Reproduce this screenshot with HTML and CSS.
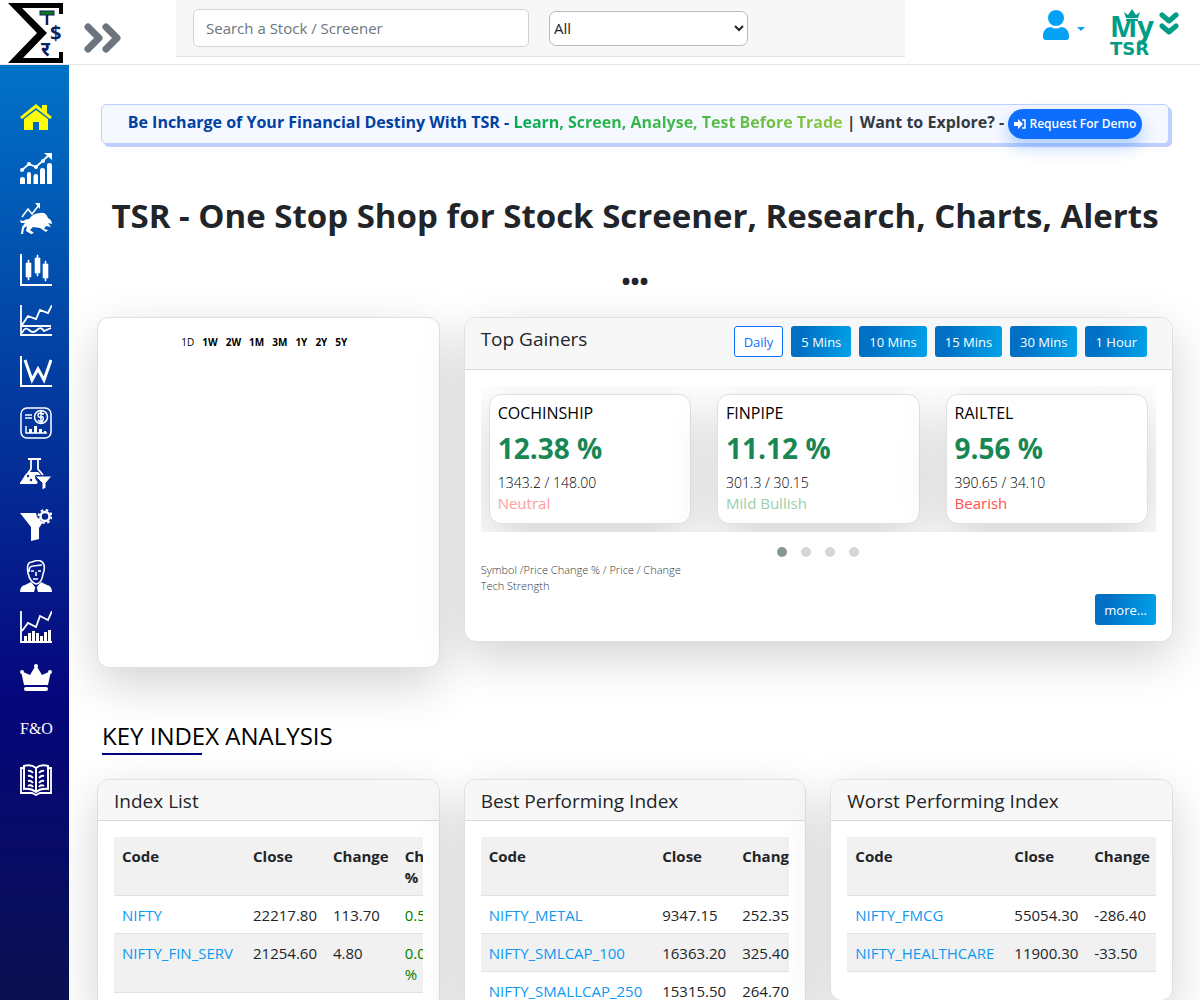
FILE: index.html
```html
<!DOCTYPE html>
<html lang="en">
<head>
<meta charset="utf-8">
<meta name="viewport" content="width=device-width, initial-scale=1">
<title>TSR - Stock Screener, Research, Charts, Alerts</title>
<link rel="stylesheet" href="styles.css">
</head>
<body>
<header class="topbar">
  <a class="logo" href="#" aria-label="TSR home">
    <svg width="58" height="62" viewBox="0 0 58 62">
      <path d="M0 0H55V11H51V5H14L39 30L15 55H51V49H55V60H0L29 30Z" fill="#000"/>
      <rect x="32" y="8" width="14" height="4" fill="#0a7a14" stroke="#0b1f66"/>
      <path d="M39 12V22" stroke="#0b1f66" stroke-width="2.500"/>
      <text x="42" y="37" class="logo-mark">$</text>
      <text x="33" y="53" class="logo-mark">र</text>
    </svg>
  </a>
  <button class="expand" type="button" aria-label="Expand menu">
    <svg width="40" height="32" viewBox="0 0 40 32" fill="none" stroke="#6c757d" stroke-width="7" stroke-linecap="round" stroke-linejoin="round"><path d="M5 5L16 16L5 27M23 5L34 16L23 27"/></svg>
  </button>
  <form class="search">
    <input class="search-input" type="text" placeholder="Search a Stock / Screener" aria-label="Search a Stock / Screener">
    <select class="search-select" aria-label="Category"><option>All</option></select>
  </form>
  <div class="account">
    <button class="user" type="button" aria-label="Account">
      <svg width="28" height="32" viewBox="0 0 28 32" fill="#05a1f5"><circle cx="14" cy="9" r="8"/><path d="M1 27C1 21 5 18 9 18Q14 21 19 18C23 18 27 21 27 27V28Q27 31 24 31H4Q1 31 1 28Z"/></svg>
      <svg width="8" height="4" viewBox="0 0 8 4" fill="#05a1f5"><path d="M0 0H8L4 4Z"/></svg>
    </button>
    <a class="mytsr" href="#">
      <span class="mytsr-name"><span class="mytsr-my">My</span><span class="mytsr-tsr">TSR</span>
        <svg class="mytsr-crown" width="18" height="12" viewBox="0 0 18 12" fill="#009c86" stroke="#fff" stroke-width="1" paint-order="stroke"><path d="M3 9L1 3L5 6L9 0L13 6L17 3L15 9ZM3 10H15V12H3Z"/></svg>
      </span>
      <svg width="20" height="24" viewBox="0 0 20 24" fill="none" stroke="#009c86" stroke-width="5" stroke-linecap="round" stroke-linejoin="round"><path d="M3 3L10 9L17 3M3 14L10 20L17 14"/></svg>
    </a>
  </div>
</header>
<div class="shell">
  <nav class="sidebar" aria-label="Main">
    <a href="#" aria-label="Home"><svg viewBox="0 0 32 32" fill="#ff0"><path d="M16 3L0 16L2 18L16 7L30 18L32 16L27 12V4H22V8Z"/><path d="M16 9L4 18V29H13V21H19V29H28V18Z"/></svg></a>
    <a href="#" aria-label="Growth"><svg viewBox="0 0 32 32"><path d="M0 27Q0 25 2.500 25Q5 25 5 27V32H0ZM7 22Q7 20 9 20Q11 20 11 22V32H7ZM13.500 24Q13.500 22 16 22Q18 22 18 24V32H13.500ZM20 18Q20 16 22.500 16Q25 16 25 18V32H20ZM27 13Q27 11 29.500 11Q32 11 32 13V32H27Z"/><path d="M2 18L9 12L16 15L29 3" fill="none" stroke="#fff" stroke-width="1.800"/><path d="M24 1H32V8Z"/><circle cx="2" cy="18" r="2"/><circle cx="9" cy="12" r="2"/><circle cx="16" cy="15" r="2"/><circle cx="23" cy="9" r="2"/></svg></a>
    <a href="#" aria-label="Bulls"><svg viewBox="0 0 32 32"><path d="M2 14L8 6L12 11L19 2" fill="none" stroke="#fff" stroke-width="1.600"/><path d="M15 0H20V6Z"/><path d="M3 18Q6 16 9 16Q13 10 20 10Q26 9 28 15Q32 17 32 21L28 20L31 24L26 23L24 26L28 27L26 29L20 25L13 24L10 27L14 30L11 31L6 28L7 23L4 25L3 31L1 31L2 24L5 20L1 20L0 17Z"/></svg></a>
    <a href="#" aria-label="Candlesticks"><svg viewBox="0 0 32 32"><path d="M1 0V31H32" fill="none" stroke="#fff" stroke-width="2"/><path d="M8 6H9V9H11V23H9V26H8V23H6V9H8ZM17 1H18V4H20V19H18V22H17V19H15V4H17ZM25 7H26V10H28V24H26V27H25V24H23V10H25Z" stroke="#fff" stroke-width=".6"/></svg></a>
    <a href="#" aria-label="Trend"><svg viewBox="0 0 32 32" fill="none" stroke="#fff" stroke-width="1.800"><path d="M1 0V30H32M2 21H31M2 20L8 11L16 14L20 5L28 8L32 0M2 28Q5 21 9 25T17 25T24 26L31 23"/></svg></a>
    <a href="#" aria-label="Patterns"><svg viewBox="0 0 32 32" fill="none" stroke="#fff"><path d="M1 0V30H32" stroke-width="2"/><path d="M5 4L12 24L18 13L24 24L31 4" stroke-width="3"/></svg></a>
    <a href="#" aria-label="Report"><svg viewBox="0 0 32 32" fill="none" stroke="#fff" stroke-width="1.500"><rect x="1" y="1" width="30" height="30" rx="6"/><circle cx="21" cy="10" r="6.500"/><path d="M5 8H12M5 11H12M24 7Q18 5 18 8T21 10T23 13T18 13M21 4V16M6 19V26H27"/><path d="M9 22H12V26H9ZM14 19H17V26H14ZM19 22H22V26H19ZM24 24H26V26H24Z" fill="#fff" stroke="none"/></svg></a>
    <a href="#" aria-label="Lab"><svg viewBox="0 0 32 32"><path d="M8 1H21M11 1V11L1 25H17M18 1V11L23 17" fill="none" stroke="#fff" stroke-width="1.800"/><path d="M5 17L9 14H18L21 17H16L15 20L18 25H1Z"/><circle cx="8" cy="18" r="1.200" fill="#042d92"/><circle cx="11" cy="22" r="1.200" fill="#042d92"/><path d="M15 18H32L26 25V30L22 32V25Z" stroke="#042d92" stroke-width="1"/></svg></a>
    <a href="#" aria-label="Filters"><svg viewBox="0 0 32 32"><path d="M0 4H16Q17 11 23 13L19 19V30L11 32V18Z"/><circle cx="25" cy="7.500" r="4.500" fill="none" stroke="#fff" stroke-width="2.500"/><circle cx="25" cy="7.500" r="6.500" fill="none" stroke="#fff" stroke-width="2" stroke-dasharray="2.600 2.500"/></svg></a>
    <a href="#" aria-label="Advisor"><svg viewBox="0 0 32 32"><path d="M0 32Q0 26 5 25L11 22L16 28L21 22L27 25Q32 26 32 32Z"/><path d="M8 13Q6 2 12 2Q22-2 24 5Q25 9 23 14Q22 23 16 24Q10 22 8 13ZM9 12Q9 6 13 6L22 5M11 11H14M18 11H21M16 12V16M13 19H18" fill="none" stroke="#fff" stroke-width="1.600"/><path d="M16 25L14 32H18Z" fill="#071684"/></svg></a>
    <a href="#" aria-label="Volume"><svg viewBox="0 0 32 32"><path d="M1 0V31H32M2 20L8 12L16 16L20 5L28 9L32 0" fill="none" stroke="#fff" stroke-width="1.800"/><path d="M4 25H7V30H4ZM8 22H11V30H8ZM12 20H15V30H12ZM16 22H19V30H16ZM20 25H23V30H20ZM24 21H27V30H24ZM28 19H31V30H28Z"/></svg></a>
    <a href="#" aria-label="Premium"><svg viewBox="0 0 32 32"><path d="M4 23L1 9L10 13L16 3L22 13L31 9L28 23Z"/><circle cx="16" cy="4" r="2"/><circle cx="2" cy="10" r="2"/><circle cx="30" cy="10" r="2"/><rect x="4" y="25" width="24" height="4" rx="2"/></svg></a>
    <a href="#" class="fno">F&amp;O</a>
    <a href="#" aria-label="Learn"><svg viewBox="0 0 32 32" fill="none" stroke="#fff"><path d="M16 4Q11 0 4 2V25Q11 24 16 28Q21 24 28 25V2Q21 0 16 4V28" stroke-width="2"/><path d="M4 4H1V29H12L16 31L20 29H31V4H28" stroke-width="1.800"/><path d="M8 7Q11 6 13 9M8 12Q11 11 13 14M8 17Q11 16 13 19M8 22Q11 20 13 23M24 7Q21 6 19 9M24 12Q21 11 19 14M24 17Q21 16 19 19M24 22Q21 20 19 23" stroke-width="2"/></svg></a>
  </nav>
  <main class="content">
    <div class="banner">
      <span class="banner-lead">Be Incharge of Your Financial Destiny With TSR - </span><span class="banner-steps">Learn, Screen, Analyse, Test Before Trade</span> | Want to Explore? -
      <button class="demo" type="button"><svg width="12" height="10" viewBox="0 0 12 10"><path d="M0 3H4V0L9 5L4 10V7H0Z" fill="#fff"/><path d="M8 1H11V9H8" fill="none" stroke="#fff" stroke-width="1.500"/></svg> Request For Demo</button>
    </div>
    <h1 class="headline">TSR - One Stop Shop for Stock Screener, Research, Charts, Alerts <span class="headline-dots">•••</span></h1>
    <div class="grid">
      <section class="card chart">
        <div class="ranges"><button type="button" class="on">1D</button><button type="button">1W</button><button type="button">2W</button><button type="button">1M</button><button type="button">3M</button><button type="button">1Y</button><button type="button">2Y</button><button type="button">5Y</button></div>
      </section>
      <section class="card gainers">
        <div class="card-head gainers-head">
          <h2 class="card-title">Top Gainers</h2>
          <div class="periods"><button class="btn outline" type="button">Daily</button><button class="btn" type="button">5 Mins</button><button class="btn" type="button">10 Mins</button><button class="btn" type="button">15 Mins</button><button class="btn" type="button">30 Mins</button><button class="btn" type="button">1 Hour</button></div>
        </div>
        <div class="card-body">
          <div class="carousel">
            <article class="card stock"><h3 class="stock-name">COCHINSHIP</h3><p class="stock-pct">12.38 %</p><p class="stock-price">1343.2 / 148.00</p><p class="neutral">Neutral</p></article>
            <article class="card stock"><h3 class="stock-name">FINPIPE</h3><p class="stock-pct">11.12 %</p><p class="stock-price">301.3 / 30.15</p><p class="bullish">Mild Bullish</p></article>
            <article class="card stock"><h3 class="stock-name">RAILTEL</h3><p class="stock-pct">9.56 %</p><p class="stock-price">390.65 / 34.10</p><p class="bearish">Bearish</p></article>
          </div>
          <div class="dots"><button type="button" class="dot active" aria-label="Page 1"></button><button type="button" class="dot" aria-label="Page 2"></button><button type="button" class="dot" aria-label="Page 3"></button><button type="button" class="dot" aria-label="Page 4"></button></div>
          <p class="legend">Symbol /Price Change % / Price / Change<br>Tech Strength</p>
          <div class="more"><button class="btn" type="button">more...</button></div>
        </div>
      </section>
    </div>
    <h2 class="section-title">KEY INDEX ANALYSIS</h2>
    <div class="grid">
      <section class="card">
        <div class="card-head"><h3 class="card-title">Index List</h3></div>
        <div class="card-body"><div class="scroller"><table class="data">
          <thead><tr><th>Code</th><th>Close</th><th>Change</th><th>Chg<br>%</th></tr></thead>
          <tbody>
          <tr><td><a href="#">NIFTY</a></td><td>22217.80</td><td>113.70</td><td class="up">0.51%</td></tr>
          <tr><td><a href="#">NIFTY_FIN_SERV</a></td><td>21254.60</td><td>4.80</td><td class="up">0.02<br>%</td></tr>
          </tbody></table></div></div>
      </section>
      <section class="card">
        <div class="card-head"><h3 class="card-title">Best Performing Index</h3></div>
        <div class="card-body"><div class="scroller"><table class="data">
          <thead><tr><th>Code</th><th>Close</th><th>Change</th><th>Chg<br>%</th></tr></thead>
          <tbody>
          <tr><td><a href="#">NIFTY_METAL</a></td><td>9347.15</td><td>252.35</td><td class="up">2.77%</td></tr>
          <tr><td><a href="#">NIFTY_SMLCAP_100</a></td><td>16363.20</td><td>325.40</td><td class="up">2.03%</td></tr>
          <tr><td><a href="#">NIFTY_SMALLCAP_250</a></td><td>15315.50</td><td>264.70</td><td class="up">1.76%</td></tr>
          </tbody></table></div></div>
      </section>
      <section class="card worst">
        <div class="card-head"><h3 class="card-title">Worst Performing Index</h3></div>
        <div class="card-body"><div class="scroller"><table class="data">
          <thead><tr><th>Code</th><th>Close</th><th>Change</th><th>Chg<br>%</th></tr></thead>
          <tbody>
          <tr><td><a href="#">NIFTY_FMCG</a></td><td>55054.30</td><td>-286.40</td><td>-0.52%</td></tr>
          <tr><td><a href="#">NIFTY_HEALTHCARE</a></td><td>11900.30</td><td>-33.50</td><td>-0.28%</td></tr>
          </tbody></table></div></div>
      </section>
    </div>
  </main>
</div>
</body>
</html>
```
FILE: styles.css
```css
* { box-sizing: border-box; }
body {
  margin: 0;
  height: 100vh;
  display: flex;
  flex-direction: column;
  font-family: "Open Sans", "Noto Sans", sans-serif;
  font-size: 15px;
  line-height: 21px;
  color: #212529;
  background: #fff;
}
h1, h2, h3, p { margin: 0; font-weight: 400; }
button, input, select { font: inherit; margin: 0; }
button { border: 0; padding: 0; background: none; cursor: pointer; }
a { color: #0d99f2; text-decoration: none; }

/* Top bar */
.topbar {
  flex: none;
  display: flex;
  align-items: flex-start;
  height: 65px;
  border-bottom: 1px solid #e4e6ee;
}
.logo { padding: 3px 0 0 8px; }
.logo svg { display: block; }
.logo-mark { font: 700 20px "Noto Sans", sans-serif; fill: #0b1f66; }
.expand { margin: 22px 0 0 17px; }
.expand svg { display: block; }
.search {
  display: flex;
  align-items: center;
  gap: 20px;
  width: 729px;
  height: 57px;
  margin-left: 53px;
  padding: 0 17px;
  background: #f7f7f7;
  border-bottom: 1px solid #dee2e6;
}
.search-input {
  width: 336px;
  height: 38px;
  padding: 0 12px;
  border: 1px solid #ced4da;
  border-radius: 5px;
  background: #fff;
}
.search-input::placeholder { color: #6c757d; opacity: 1; }
.search-select {
  width: 199px;
  height: 35px;
  border: 1px solid #bbb;
  border-radius: 7px;
  background: #fff;
  color: #212529;
}
.account {
  display: flex;
  align-items: flex-start;
  gap: 25px;
  margin-left: auto;
  padding: 9px 21px 0 0;
}
.user { display: flex; align-items: center; gap: 7px; }
.user svg { display: block; }
.user svg + svg { margin-top: 8px; }
.mytsr { display: flex; gap: 5px; color: #009c86; font-weight: 700; }
.mytsr > svg { margin-top: 3px; }
.mytsr-name { position: relative; display: block; width: 44px; }
.mytsr-my { display: block; font: 700 29px/33px "Noto Sans", sans-serif; }
.mytsr-tsr { display: block; font: 700 18px/14px "DejaVu Sans", sans-serif; }
.mytsr-crown { position: absolute; left: 13px; top: 0; }

/* Sidebar */
.shell { flex: 1; min-height: 0; display: flex; }
.sidebar {
  flex: none;
  width: 69px;
  padding: 36px 17px 0 20px;
  display: flex;
  flex-direction: column;
  gap: 19px;
  background: linear-gradient(#0072c6, #06067c 68%, #0a1050);
}
.sidebar a { display: block; height: 32px; width: 32px; }
.sidebar svg { display: block; width: 32px; height: 32px; fill: #fff; }
.sidebar svg[fill="none"] { fill: none; }
.sidebar svg[fill="#ff0"] { fill: #ff0; }
.sidebar .fno { font: 400 16px/32px "Liberation Serif", serif; color: #fff; }

/* Content */
.content {
  flex: 1;
  min-width: 0;
  padding: 39px 27px 24px 28px;
  overflow: hidden auto;
  scrollbar-width: none;
}
.banner {
  margin: 0 4px;
  height: 40px;
  text-align: center;
  font-size: 16px;
  line-height: 35px;
  font-weight: 700;
  color: #343a40;
  white-space: nowrap;
  background: #f5f8ff;
  border: 1px solid #bfcfff;
  border-radius: 5px;
  box-shadow: 3px 3px 0 #bfcfff;
}
.banner-lead { color: #0041a3; }
.banner-steps {
  color: transparent;
  background: linear-gradient(90deg, #00ab54, #8cc63f);
  -webkit-background-clip: text;
  background-clip: text;
}
.demo {
  height: 30px;
  padding: 0 6px;
  border-radius: 15px;
  background: #0d6efd;
  color: #fff;
  font-size: 12px;
  line-height: 30px;
  font-weight: 600;
  box-shadow: 0 8px 16px rgba(13, 110, 253, .3);
}
.demo svg { vertical-align: -1px; }
.headline {
  margin: 41px 0 8px;
  text-align: center;
  font-size: 33px;
  line-height: 62px;
  font-weight: 700;
}
.headline-dots { font-size: 24px; line-height: 24px; }
.grid { display: grid; grid-template-columns: repeat(3, minmax(0, 1fr)); gap: 24px; align-items: start; }
.card {
  background: #fff;
  border: 1px solid #dfdfdf;
  border-radius: 12px;
  box-shadow: 0 16px 48px rgba(0, 0, 0, .175);
}
.card-head {
  padding: 11px 16px 8px;
  background: #f7f7f7;
  border-bottom: 1px solid #d9d9d9;
  border-radius: 11px 11px 0 0;
}
.card-title { font-size: 19px; line-height: 21px; font-weight: 500; }
.card-body { padding: 16px; }
.chart { height: 351px; }
.ranges { display: flex; justify-content: center; gap: 8px; padding: 14px 8px 0 0; font-size: 10px; font-weight: 700; }
.ranges .on { font-weight: 400; }
.gainers { grid-column: span 2; }
.gainers-head { display: flex; justify-content: space-between; padding: 8px 25px 12px 16px; }
.gainers-head .card-title { padding-top: 3px; }
.periods { display: flex; gap: 8px; }
.btn {
  height: 31px;
  padding: 0 9px;
  border-radius: 3px;
  font-size: 13px;
  line-height: 32px;
  color: #fff;
  background: linear-gradient(100deg, #006fc4 20%, #02a3ea);
}
.periods .btn { padding: 0 10px; }
.periods .outline { padding: 0 9px; line-height: 30px; color: #0d6efd; background: #fff; border: 1px solid #0d6efd; }
.carousel {
  display: grid;
  grid-template-columns: repeat(3, 1fr);
  gap: 26px;
  padding: 8px;
  overflow: hidden;
}
.stock { height: 130px; padding: 8px; color: #000; }
.stock-name { font-size: 16px; line-height: 21px; font-weight: 500; }
.stock-pct { font-size: 28px; line-height: 48px; font-weight: 700; color: #198754; }
.stock-price { font-size: 14px; font-weight: 300; }
.neutral { color: #ff9d9d; }
.bullish { color: #98cfae; }
.bearish { color: #ff5050; }
.dots { display: flex; justify-content: center; gap: 14px; padding: 15px 0 5px; }
.dot { width: 10px; height: 10px; border-radius: 5px; background: #d6d6d6; }
.dot.active { background: #869791; }
.legend { font-size: 11px; line-height: 16px; font-weight: 300; color: #343a40; }
.more { display: flex; justify-content: flex-end; }
.section-title { margin: 53px 5px 24px; color: #000; font-size: 24px; line-height: 30px; }
.section-title::after { content: ""; display: block; width: 100px; height: 2px; margin-top: 2px; background: #000080; }

/* Index tables */
.scroller { overflow: hidden; }
.worst .scroller { padding-bottom: 12px; }
.data { border-collapse: collapse; min-width: 100%; white-space: nowrap; }
.data th, .data td { padding: 9px 8px 7px; text-align: left; vertical-align: top; border-bottom: 1px solid #dee2e6; }
.data th:first-child, .data td:first-child { padding-right: 12px; }
.data th { font-weight: 700; }
.data tr:nth-child(even), .data thead tr { background: #f1f1f1; }
.data .up { color: #008000; }
```
